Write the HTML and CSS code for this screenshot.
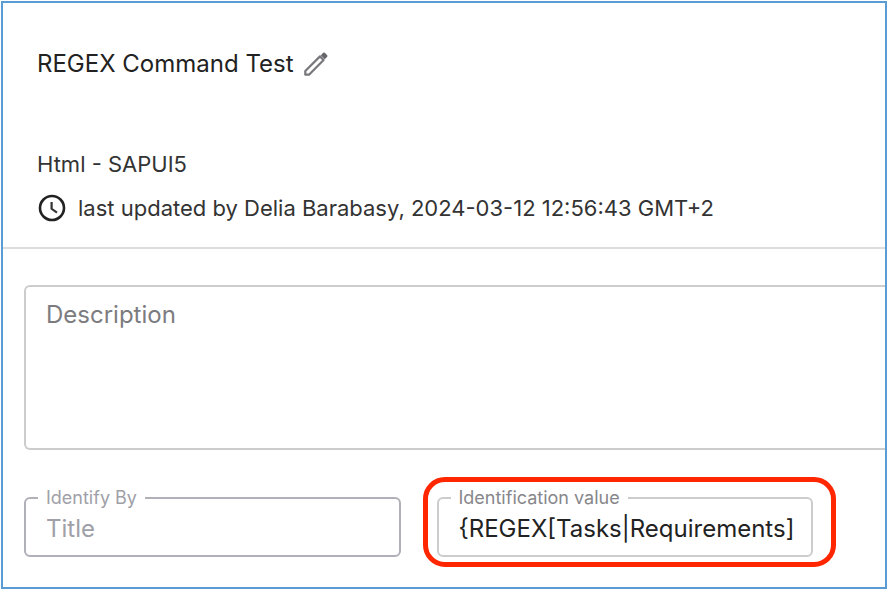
FILE: index.html
```html
<!DOCTYPE html>
<html lang="en">
<head>
    <meta charset="UTF-8">
    <meta name="viewport" content="width=device-width, initial-scale=1.0">
    <title>REGEX Command Test</title>
    <link rel="stylesheet" href="styles.css">
</head>
<body>

    <main class="panel">
        <header class="panel-header">
            <div class="title-row">
                <h1 class="title">REGEX Command Test</h1>
                <button class="edit-btn" type="button" aria-label="Edit name">
                    <svg class="edit-icon" viewBox="0 0 24 24" aria-hidden="true">
                        <path d="M1.3 22.7 V19 L16 4.4 L19.6 8 L5 22.7 Z" fill="none" stroke="#77777c" stroke-width="2.2" stroke-linejoin="round"/>
                        <path d="M16.8 3.2 L19.2 0.8 Q20 0.2 20.8 0.8 L23.2 3.2 Q23.8 4 23.2 4.8 L20.8 7.2 Z" fill="#66666c"/>
                    </svg>
                </button>
            </div>
            <p class="type">Html - SAPUI5</p>
            <p class="updated">
                <svg class="clock-icon" viewBox="0 0 28 28" aria-hidden="true">
                    <circle cx="14" cy="14" r="12" fill="none" stroke="#222" stroke-width="2.6"/>
                    <path d="M13.6 8 V14.8 L19 18.6" fill="none" stroke="#333" stroke-width="2.2"/>
                </svg>
                last updated by Delia Barabasy, 2024-03-12 12:56:43 GMT+2
            </p>
        </header>

        <form class="form">
            <textarea class="description" placeholder="Description" aria-label="Description"></textarea>

            <div class="fields">
                <fieldset class="field field-muted">
                    <legend><label for="identifyBy">Identify By</label></legend>
                    <input id="identifyBy" type="text" value="Title" readonly>
                </fieldset>

                <div class="highlight">
                    <fieldset class="field">
                        <legend><label for="identificationValue">Identification value</label></legend>
                        <input id="identificationValue" type="text" value="{REGEX[Tasks|Requirements]">
                    </fieldset>
                </div>
            </div>
        </form>
    </main>

</body>
</html>
```

FILE: styles.css
```css
* { box-sizing: border-box; }
body { margin: 1px 5px 5px 1px; font-family: Inter, "Liberation Sans", sans-serif; background-color: #fff; color: #222; }
h1, p { margin: 0; font-weight: 400; }

.panel { border: 2px solid #5b9bd5; padding-bottom: 30px; }
.panel-header { padding: 45px 34px 25px; border-bottom: 2px solid #dcdcde; }
.title-row { display: flex; align-items: center; gap: 10px; margin-bottom: 70px; }
.title { font-size: 24px; line-height: 32px; }
.edit-btn { display: flex; padding: 0; border: none; background: none; cursor: pointer; }
.edit-icon { width: 24px; height: 24px; }
.type { font-size: 22px; line-height: 28px; color: #333; }
.updated { display: flex; align-items: center; gap: 12px; margin-top: 16px; padding-left: 1px; font-size: 22px; line-height: 28px; color: #333; }
.clock-icon { width: 28px; height: 28px; flex: none; }

.form { padding: 36px 0 0 21px; }
.description { display: block; width: 100%; height: 165px; padding: 12px 20px; border: 2px solid #ccc; border-right: none; border-radius: 6px 0 0 6px; background: none; font-family: inherit; font-size: 24px; line-height: 32px; resize: none; outline: none; }
.description::placeholder { color: #7c7c80; opacity: 1; }

.fields { display: grid; grid-template-columns: 1fr 1fr; gap: 36px; margin-top: 36px; padding-right: 72px; }
.field { min-width: 0; margin: 0; padding: 0 12px 8px; border: 2px solid #ccc; border-radius: 6px; }
.field legend { padding: 0 8px; font-size: 18px; line-height: 24px; color: #87878b; }
.field input { display: block; width: 100%; height: 37px; padding: 0 0 0 8px; border: none; background: none; font-family: inherit; font-size: 24px; color: #222; outline: none; }
.field-muted { border-color: #b0b0b8; }
.field-muted legend, .field-muted input { color: #a0a0a8; }

/* red marker drawn around the field */
.highlight { position: relative; }
.highlight::after { content: ""; position: absolute; inset: -9px -23px -10px -14px; border: 5px solid #ff2600; border-radius: 22px; pointer-events: none; }
```
